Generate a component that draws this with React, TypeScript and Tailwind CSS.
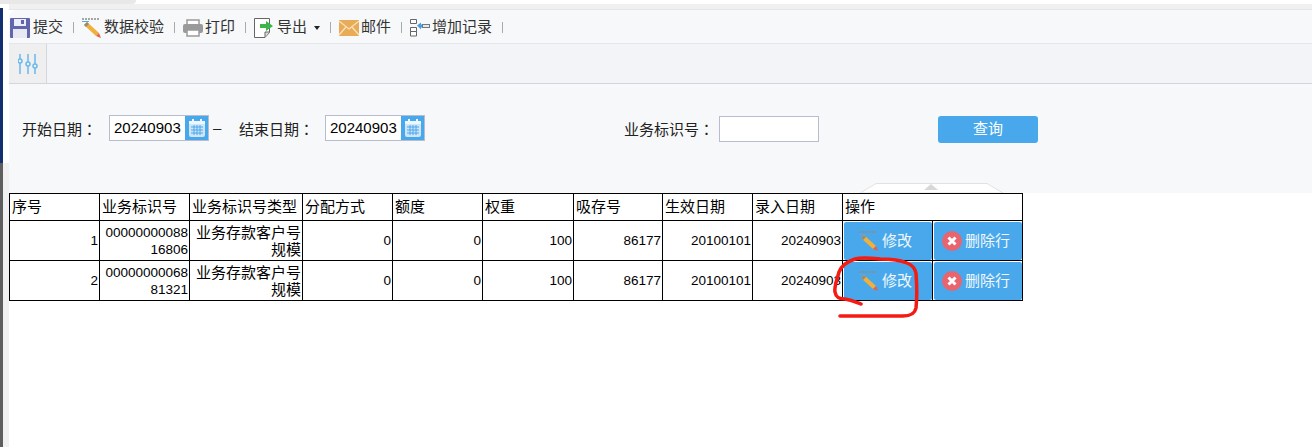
import { useState } from 'react';

const FONT = '"Liberation Sans", "Noto Sans CJK SC", sans-serif';

const HEADERS = [
    { label: '序号', width: 'w-[90px]' },
    { label: '业务标识号', width: 'w-[90px]' },
    { label: '业务标识号类型', width: 'w-[113px]' },
    { label: '分配方式', width: 'w-[90px]' },
    { label: '额度', width: 'w-[90px]' },
    { label: '权重', width: 'w-[91px]' },
    { label: '吸存号', width: 'w-[89px]' },
    { label: '生效日期', width: 'w-[90px]' },
    { label: '录入日期', width: 'w-[90px]' },
];

const ROWS = [
    ['1', '0000000008816806', '业务存款客户号规模', '0', '0', '100', '86177', '20100101', '20240903'],
    ['2', '0000000006881321', '业务存款客户号规模', '0', '0', '100', '86177', '20100101', '20240903'],
];

function SaveIcon() {
    return (
        <svg width="20" height="20" viewBox="0 0 20 20">
            <rect x="0" y="0" width="20" height="20" rx="1" fill="#6266ae" />
            <rect x="4" y="1" width="12" height="7" fill="#eeeef8" />
            <rect x="11" y="2" width="3" height="4" fill="#6266ae" />
            <rect x="3" y="11" width="14" height="9" fill="#e8e8f2" />
        </svg>
    );
}

function PencilIcon() {
    return (
        <svg width="20" height="20" viewBox="0 0 20 20">
            <path d="M0 1h18" stroke="#8a8a8a" strokeWidth="1.500" strokeDasharray="2 1" />
            <path d="M0 3.500h7" stroke="#5aa9e6" strokeWidth="1" />
            <path d="M2 7l3-3 12 11-3 3z" fill="#f0b13c" />
            <path d="M2 7l3-3 2 2-3 3z" fill="#8f8f78" />
            <path d="M14 18l3-3 2 5z" fill="#e8604c" />
        </svg>
    );
}

function PrintIcon() {
    return (
        <svg width="20" height="18" viewBox="0 0 20 18">
            <rect x="4" y="1" width="12" height="5" fill="#fff" stroke="#9a9a9a" strokeWidth="1.500" />
            <rect x="0" y="5" width="20" height="9" rx="2" fill="#9a9a9a" />
            <rect x="4" y="11" width="12" height="6" fill="#fff" stroke="#9a9a9a" strokeWidth="1.500" />
        </svg>
    );
}

function ExportIcon() {
    return (
        <svg width="20" height="20" viewBox="0 0 20 20">
            <path d="M.5.5h15v14l-4.500 5H.5z" fill="#fff" stroke="#666" />
            <path d="M11 19v-5h4.500" fill="#ddd" stroke="#666" />
            <path d="M6 6h6V3l7 5-7 5v-3H6z" fill="#3cb54a" />
        </svg>
    );
}

function MailIcon() {
    return (
        <svg width="20" height="16" viewBox="0 0 20 16">
            <rect width="20" height="16" fill="#e8ac58" />
            <path d="M0 1l10 8 10-8M0 15l7-8M20 15l-7-8" fill="none" stroke="#fbe3bd" strokeWidth="1.200" />
        </svg>
    );
}

function AddRowIcon() {
    return (
        <svg width="20" height="18" viewBox="0 0 20 18">
            <path d="M.5.500h6v4h-6zM.5 8.500h6v4h-6zM.5 12.500h6v4.500h-6z" fill="#fff" stroke="#666" />
            <path d="M7 6.500l4-3v2h2v3h-2v2z" fill="#4a9ee0" />
            <rect x="12.500" y="5.500" width="7" height="3" fill="#dcecf9" stroke="#777" />
        </svg>
    );
}

function SlidersIcon() {
    return (
        <svg width="20" height="20" viewBox="0 0 20 20" fill="none" stroke="#6ab8f0" strokeWidth="1.500">
            <path d="M2 0v5M2 9v11M10 0v8M10 12v8M17 0v10M17 14v6" />
            <circle cx="2" cy="7" r="2" />
            <circle cx="10" cy="10" r="2" />
            <circle cx="17" cy="12" r="2" />
        </svg>
    );
}

function CalendarIcon() {
    return (
        <svg width="16" height="18" viewBox="0 0 16 18">
            <rect x="0" y="2" width="16" height="16" rx="2" fill="#cfe6f8" />
            <rect x="0" y="2" width="16" height="3" fill="#eef7fd" />
            <rect x="3" y="0" width="2" height="4" fill="#eef7fd" />
            <rect x="11" y="0" width="2" height="4" fill="#eef7fd" />
            <path d="M2 8h12M2 11h12M2 14h12M5 6v10M8 6v10M11 6v10" stroke="#4aa8ea" strokeWidth="1" />
        </svg>
    );
}

function CloseBadge() {
    return (
        <svg width="20" height="20" viewBox="0 0 20 20">
            <circle cx="10" cy="10" r="10" fill="#e8656f" />
            <path d="M6.500 6.500l7 7M13.500 6.500l-7 7" stroke="#fff" strokeWidth="3" />
        </svg>
    );
}

function FieldLabel({ text, className }: { text: string; className: string }) {
    return (
        <span className={`${className} pt-px leading-[26px]`}>
            {text}
            <span className="font-['Noto_Sans_CJK_TC']">：</span>
        </span>
    );
}

function DateField({ value }: { value: string }) {
    return (
        <div className="flex h-[26px] w-[100px] border border-[#b8bccf] bg-white">
            <span className="flex-1 pl-1 text-[15px] leading-[24px] text-black">{value}</span>
            <span className="flex w-[23px] items-center justify-center bg-[#48a8eb]">
                <CalendarIcon />
            </span>
        </div>
    );
}

function ToolbarItem({ icon, label, caret, tight }: { icon: React.ReactNode; label: string; caret?: boolean; tight?: boolean }) {
    return (
        <div className="flex items-center">
            <span className="flex w-[20px] justify-center">{icon}</span>
            <span className={tight ? 'ml-[2px] text-[15px] text-[#333]' : 'ml-[3px] text-[15px] text-[#333]'}>{label}</span>
            {caret && <span className="ml-[7px] mt-[1px] h-0 w-0 border-x-[3px] border-t-[4px] border-x-transparent border-t-[#222]" />}
            <span className="ml-[10px] mr-[8px] h-[11px] w-px bg-[#aaa]" />
        </div>
    );
}

function ActionButton({ icon, label, className }: { icon: React.ReactNode; label: string; className: string }) {
    return (
        <button className={`${className} flex h-[38px] w-full items-center rounded-[2px] bg-[#48a8eb] text-[15px] text-[#f2f8fd]`}>
            {icon}
            {label}
        </button>
    );
}

export default function App() {
    const [businessId, setBusinessId] = useState('');

    return (
        <div className="relative h-[447px] w-[1312px] overflow-hidden bg-white" style={{ fontFamily: FONT }}>
            {/* window edge on the left */}
            <div className="absolute left-0 top-0 h-[4px] w-[136px] rounded-br-[8px] bg-[#e8e8e8]" />
            <div className="absolute left-0 top-[8px] h-[155px] w-[3px] bg-[#12306f]" />
            <div className="absolute bottom-0 left-0 top-[163px] w-[3px] bg-[#5e5e5e]" />
            <div className="absolute bottom-0 left-[3px] top-[163px] w-[6px] bg-[#f1f1f1]" />

            <div className="h-[4px] bg-white" />
            <div className="ml-[9px] h-[6px] border-b border-[#e6e6e6] bg-[#f0f0f0]" />

            {/* toolbar */}
            <div className="ml-[9px] flex h-[34px] items-center rounded-tl-[8px] border-b border-[#e4e6ea] bg-[#f7f8fa] pl-px pt-[2px]">
                <ToolbarItem icon={<SaveIcon />} label="提交" />
                <ToolbarItem icon={<PencilIcon />} label="数据校验" tight />
                <ToolbarItem icon={<PrintIcon />} label="打印" tight />
                <ToolbarItem icon={<ExportIcon />} label="导出" caret />
                <ToolbarItem icon={<MailIcon />} label="邮件" tight />
                <ToolbarItem icon={<AddRowIcon />} label="增加记录" tight />
            </div>

            {/* tab strip */}
            <div className="ml-[9px] flex h-[40px] border-b border-[#d4d6dc] bg-[#f3f4f8]">
                <div className="flex w-[38px] items-center justify-center border-r border-[#d4d6dc] bg-[#efefef] pt-px">
                    <SlidersIcon />
                </div>
            </div>

            {/* query form */}
            <div className="ml-[9px] flex h-[109px] items-start bg-[#f7f8fa] pt-[31px] text-[15px] text-[#222]">
                <FieldLabel text="开始日期" className="ml-[13px] w-[87px]" />
                <DateField value="20240903" />
                <span className="ml-[4px] w-[26px] leading-[26px]">–</span>
                <FieldLabel text="结束日期" className="w-[86px]" />
                <DateField value="20240903" />
                <FieldLabel text="业务标识号" className="ml-[199px] w-[95px]" />
                <input
                    value={businessId}
                    onChange={(e) => setBusinessId(e.target.value)}
                    className="mt-px h-[26px] w-[100px] border border-[#b8bccf] bg-white"
                />
                <button className="ml-[119px] mt-px h-[27px] w-[100px] rounded-[3px] bg-[#48a8eb] text-white">查询</button>
            </div>

            {/* collapse handle sits over the bottom edge of the form */}
            <svg className="absolute left-[860px] top-[183px]" width="143" height="10" viewBox="0 0 143 10">
                <path d="M0 10L16 .5h111L143 10z" fill="#fff" stroke="#e2e2e2" />
                <path d="M64 7l7-6 7 6z" fill="#d8d8d8" />
            </svg>

            {/* result table */}
            <table className="relative ml-[9px] table-fixed border-collapse text-[15px] text-black">
                <thead>
                    <tr className="h-[27px]">
                        {HEADERS.map((h) => (
                            <th key={h.label} className={`${h.width} border border-black px-[2px] text-left font-normal`}>{h.label}</th>
                        ))}
                        <th colSpan={2} className="w-[180px] border border-black px-[2px] text-left font-normal">操作</th>
                    </tr>
                </thead>
                <tbody>
                    {ROWS.map((row) => (
                        <tr key={row[0]} className="h-[40px]">
                            {row.map((cell, i) => (
                                <td key={i} className={i === 2 ? 'border border-black px-[1px] text-right leading-[17px]' : 'border border-black px-[1px] text-right text-[13.5px] leading-[17px] break-all'}>{cell}</td>
                            ))}
                            <td className="w-[90px] border border-black p-0 pl-px align-bottom">
                                <ActionButton icon={<PencilIcon />} label="修改" className="gap-[3px] pl-[15px]" />
                            </td>
                            <td className="w-[90px] border border-black p-0 pl-px align-bottom">
                                <ActionButton icon={<CloseBadge />} label="删除行" className="gap-[3px] pl-[8px]" />
                            </td>
                        </tr>
                    ))}
                </tbody>
            </table>

            {/* hand drawn annotation */}
            <svg className="absolute left-[832px] top-[256px]" width="90" height="66" viewBox="0 0 90 66" fill="none">
                <path d="M48 3C38 2 30 1 23 3C14 6 9 11 7 16C5 24 2 30 3 36C4 42 8 43 13 43C20 44 24 46 29 48M48 3C60 3 68 4 75 7C80 9 83 12 84 17C85 30 85 42 84 52C83 57 79 60 71 60L8 60" stroke="#f51a12" strokeWidth="3.500" strokeLinecap="round" strokeLinejoin="round" />
            </svg>
        </div>
    );
}
